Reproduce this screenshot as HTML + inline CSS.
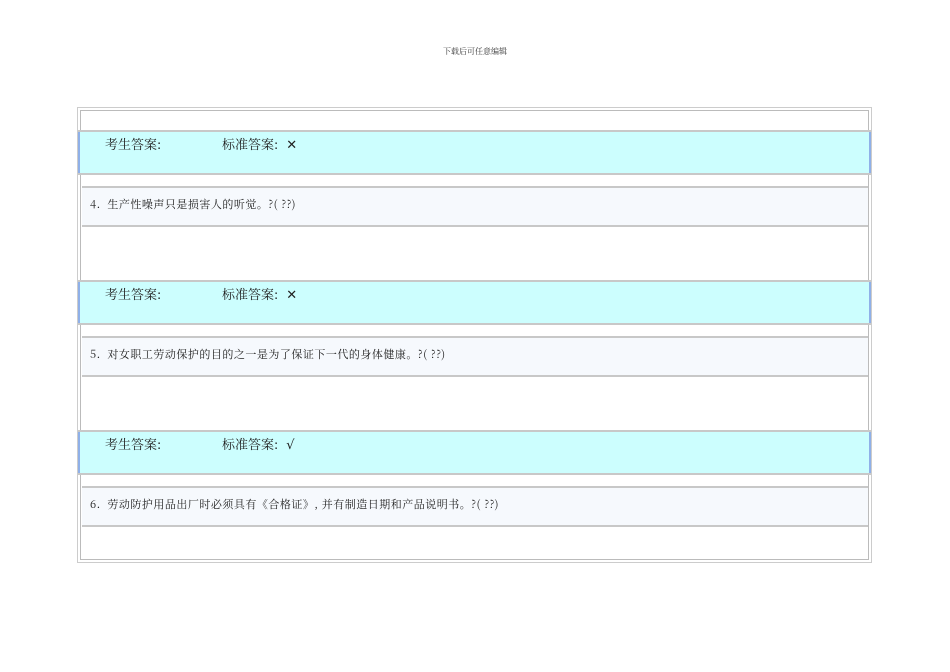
<!DOCTYPE html>
<html><head><meta charset="utf-8"><style>
body{margin:0;width:950px;height:672px;background:#fff;position:relative;font-family:"Liberation Serif","Noto Serif CJK SC",serif;overflow:hidden}
.a{position:absolute}
.hd{left:0;width:950px;top:46px;text-align:center;font-size:8px;color:#333;font-family:"Noto Serif CJK SC",serif}
.outer{left:77px;top:107px;width:793px;height:454px;border:1px solid #ccc;box-shadow:inset 0 0 0 2px #fff,inset 0 0 0 3px #bbb}
.band{left:78px;width:793px;height:41px;background:#ccfefe;border-top:2px solid #c8c8c8;border-bottom:2px solid #c8c8c8;box-sizing:content-box}
.band:before,.band:after{content:"";position:absolute;top:0;bottom:0;width:2px;background:#8fb0e8}
.band:before{left:0}.band:after{right:0}
.band span{position:absolute;top:2px;font-size:13px;color:#222;font-family:"Noto Serif CJK SC",serif}
.band b{font-weight:normal;font-family:"DejaVu Sans",sans-serif;font-size:13px;margin-left:8px}
.q{left:82px;width:786px;height:37px;background:#f6f9fd;border-top:2px solid #c8c8c8;border-bottom:2px solid #c8c8c8}
.q span{position:absolute;left:8px;top:8px;font-size:11px;letter-spacing:0.5px;color:#222;font-family:"Noto Serif CJK SC",serif;white-space:pre}
</style></head><body>
<div class="a hd">下载后可任意编辑</div>
<div class="a outer"></div>
<div class="a band" style="top:130px"><span style="left:27px">考生答案:</span><span style="left:144px">标准答案:<b>✕</b></span></div>
<div class="a q" style="top:186px"><span>4.  生产性噪声只是损害人的听觉。?( ??)</span></div>
<div class="a band" style="top:280px"><span style="left:27px">考生答案:</span><span style="left:144px">标准答案:<b>✕</b></span></div>
<div class="a q" style="top:336px"><span>5.  对女职工劳动保护的目的之一是为了保证下一代的身体健康。?( ??)</span></div>
<div class="a band" style="top:430px"><span style="left:27px">考生答案:</span><span style="left:144px">标准答案:<b>√</b></span></div>
<div class="a q" style="top:486px"><span>6.  劳动防护用品出厂时必须具有《合格证》, 并有制造日期和产品说明书。?( ??)</span></div>
</body></html>
